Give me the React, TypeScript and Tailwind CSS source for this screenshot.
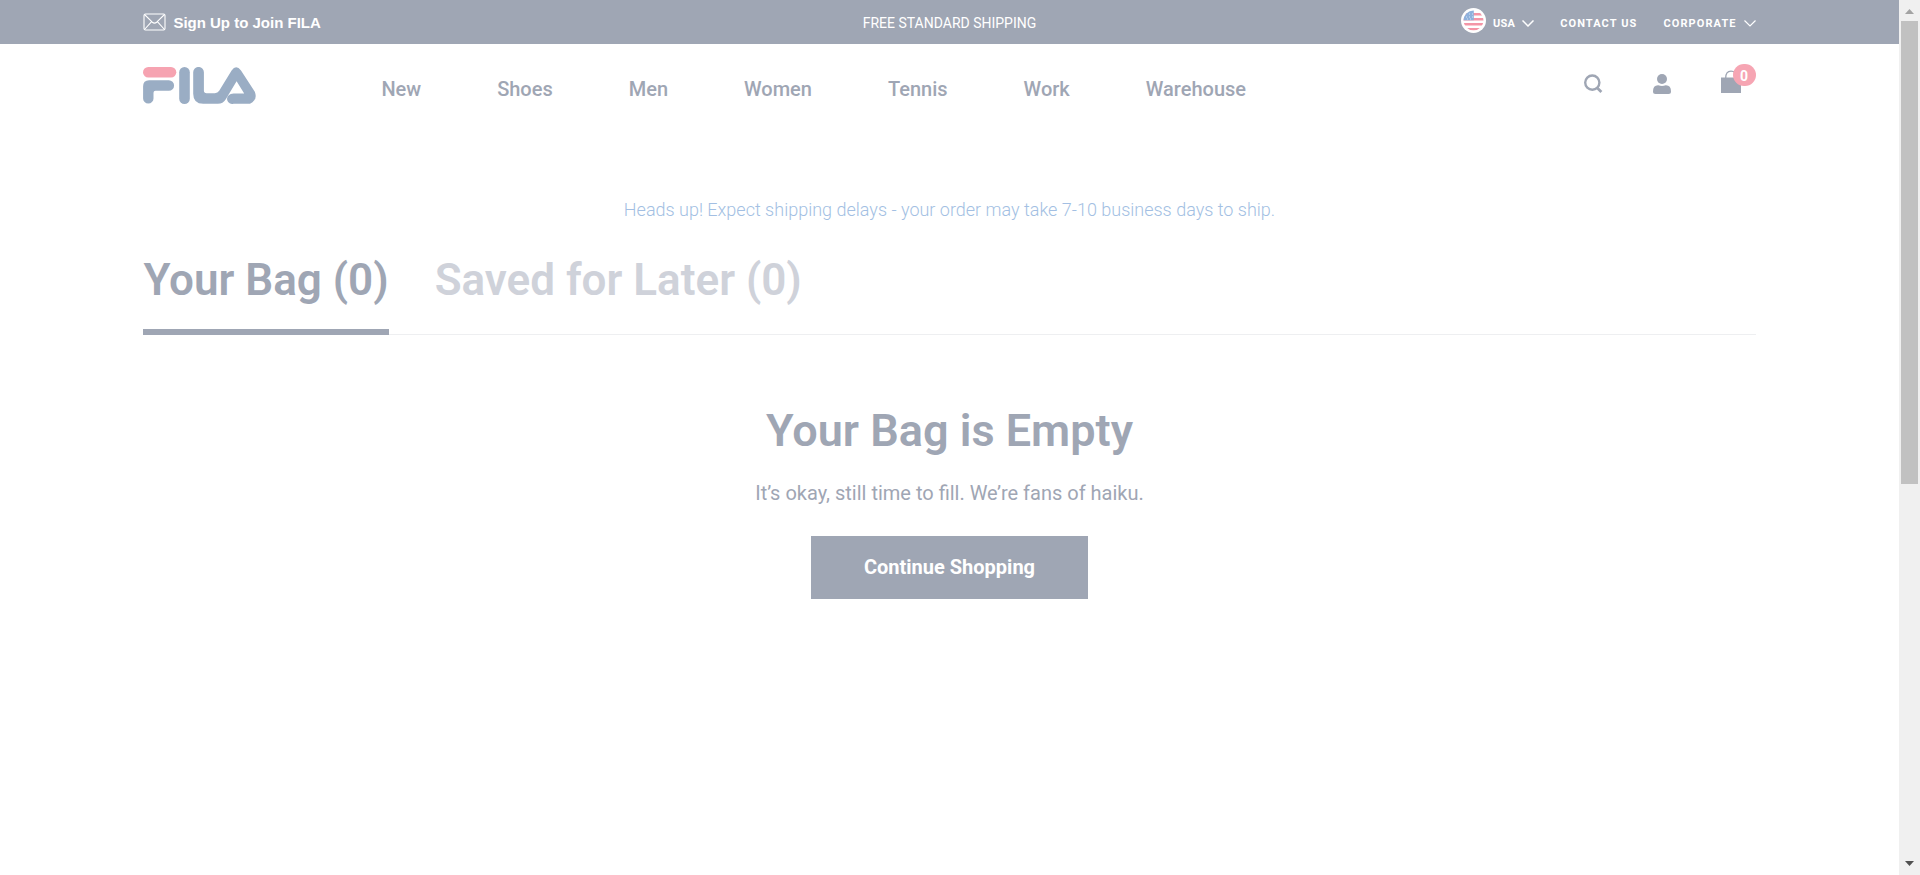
import React from "react";

const navItems = ["New", "Shoes", "Men", "Women", "Tennis", "Work", "Warehouse"];

function EnvelopeIcon() {
  return (
    <svg className="h-[18px] w-[23px]" viewBox="0 0 23 18" fill="none" stroke="#fff" strokeWidth="1.1" aria-hidden="true">
      <rect x="1" y="1" width="21" height="16" rx="1.5" />
      <path d="M1.5 1.5 9.3 9.2q2.2 1.8 4.4 0L21.5 1.5M1.5 16.5 8.6 8.7M21.5 16.5 14.4 8.7" />
    </svg>
  );
}

function FlagIcon() {
  return (
    <svg className="h-[25px] w-[25px]" viewBox="0 0 25 25" aria-hidden="true">
      <defs>
        <clipPath id="flag-disc">
          <circle cx="12.5" cy="12.5" r="10" />
        </clipPath>
      </defs>
      <circle cx="12.5" cy="12.5" r="12.5" fill="#fff" />
      <g clipPath="url(#flag-disc)">
        <path d="M2 6.2h21M2 11.3h21M2 16.3h21M2 21.2h21" stroke="#f495a6" strokeWidth="2.4" />
        <path d="M2 2h10.8v10.2H2z" fill="#8fb1dc" />
        <path d="M5 9h1M8 9h1M11 9h1M8 6h1M11 6h1M6 11h1M9 11h1" stroke="#d3e2f4" strokeWidth="1" />
      </g>
    </svg>
  );
}

function Chevron({ bold = false }: { bold?: boolean }) {
  return (
    <svg className="h-[7px] w-3" viewBox="0 0 12 7" fill="none" stroke="#fff" strokeWidth={bold ? 1.5 : 1.2} aria-hidden="true">
      <path d="M.5.5 6 6 11.5.5" />
    </svg>
  );
}

function Logo() {
  return (
    <svg className="h-[37px] w-[113px]" viewBox="0 0 113 37" fill="none" aria-hidden="true">
      <rect x="0" y="0" width="33.3" height="10.6" rx="5.3" fill="#f6a3b1" />
      <path
        d="M6 13.2h19.8a5.3 5.3 0 0 1 0 10.6H12.5q-2 0-2 2v5.6a5.2 5.2 0 0 1-10.4 0V19.2q0-6 6-6z"
        fill="#9aadc4"
      />
      <rect x="36.2" y="0" width="10.6" height="37" rx="5.3" fill="#9aadc4" />
      <path
        d="M50.2 5.3a5.35 5.35 0 0 1 10.7 0v18.2q0 2.7 2.7 2.7h8.2q2.9 0 4.4-2.4L88.6 3.4q4.5-6.2 9.4 0l13.8 21.3q3.2 8.2-4.8 12.1H90.5a5 5 0 0 1-2.7-9.8q1.3-.6 2.8-.6h10.6L93.6 14.3 82.8 32.2q-2.8 4.6-7.9 4.6H60.2q-10 0-10-10z"
        fill="#9aadc4"
      />
    </svg>
  );
}

export default function App() {
  return (
    <div className="flex min-h-screen bg-white font-[Roboto,sans-serif] text-[#9fa6b4]">
      <div className="min-w-0 flex-1">
        <div className="bg-[#9fa6b4] text-white">
          <div className="mx-auto grid h-11 w-[84.9%] grid-cols-[1fr_auto_1fr] items-center">
            <a href="#signup" className="flex items-center gap-[7px] font-['Liberation_Sans',sans-serif] text-[15px] font-bold">
              <EnvelopeIcon />
              <span className="pt-0.5">Sign Up to Join FILA</span>
            </a>
            <p className="pt-0.5 text-sm">FREE STANDARD SHIPPING</p>
            <div className="flex items-center justify-end gap-[26px] text-[11px] font-bold tracking-widest">
              <button type="button" className="flex items-center gap-[7px] tracking-wide">
                <span className="pb-1"><FlagIcon /></span>
                <span className="pt-1">USA</span>
                <span className="pt-0.5"><Chevron bold /></span>
              </button>
              <a href="#contact" className="pt-1">CONTACT US</a>
              <button type="button" className="flex items-center gap-[7px] tracking-widest">
                <span className="pt-1">CORPORATE</span>
                <span className="pt-0.5"><Chevron /></span>
              </button>
            </div>
          </div>
        </div>

        <header className="mx-auto flex w-[84.9%] items-start pt-[23px]">
          <a href="#home" aria-label="FILA"><Logo /></a>
          <nav className="ml-[125px] flex gap-[76px] pt-2.5 text-[20px] leading-6 font-medium">
            {navItems.map((item) => (
              <a key={item} href={`#${item.toLowerCase()}`}>{item}</a>
            ))}
          </nav>
          <div className="ml-auto flex items-start gap-[50px]">
            <button type="button" aria-label="Search" className="mt-[7px]">
              <svg className="h-[19px] w-[19px]" viewBox="0 0 19 19" fill="none" stroke="#9fa6b4" strokeWidth="2.4">
                <circle cx="8.3" cy="8.6" r="7.1" />
                <path d="m12.8 13.6 4.6 4.4" strokeWidth="2.8" />
              </svg>
            </button>
            <button type="button" aria-label="Account" className="mt-[7px]">
              <svg className="h-5 w-[18px]" viewBox="0 0 18 20" fill="#9fa6b4">
                <circle cx="9" cy="5" r="5" />
                <path d="M0 17.5q0-6.5 5.3-6.3 3.7 1.5 7.4 0Q18 11 18 17.5 18 20 15.5 20h-13Q0 20 0 17.5z" />
              </svg>
            </button>
            <a href="#bag" aria-label="Bag, 0 items" className="relative block h-[29px] w-[35px]">
              <svg className="mt-[3px] h-[23px] w-5" viewBox="0 0 20 23" fill="none">
                <path d="M0 7.5h20V23H0z" fill="#9fa6b4" />
                <path d="M4.7 8q0-6.8 5.3-6.8T15.3 8" stroke="#9fa6b4" strokeWidth="1.3" />
              </svg>
              <span className="absolute -top-[3px] right-0 flex h-[22px] w-[23px] items-center justify-center rounded-full bg-[#f6a5b3] pt-0.5 text-sm font-bold text-white">0</span>
            </a>
          </div>
        </header>

        <main className="mx-auto w-[84.9%] pt-[94px]">
          <p className="text-center text-[18px] leading-6 font-light text-[#a3bfe3]">
            Heads up! Expect shipping delays - your order may take 7-10 business days to ship.
          </p>
          <div className="mt-[31px] flex gap-[46px] border-b border-[#eeeff1] text-[44px] leading-[54px] font-semibold">
            <button type="button" className="-mb-px border-b-[6px] border-[#9fa6b4] pb-[22px]">Your Bag (0)</button>
            <button type="button" className="pb-[27px] text-[#cfd2da]">Saved for Later (0)</button>
          </div>
          <section className="flex flex-col items-center pt-[69px]">
            <h1 className="text-[45px] leading-[54px] font-semibold">Your Bag is Empty</h1>
            <p className="mt-5 text-[20px] leading-[30px]">It’s okay, still time to fill. We’re fans of haiku.</p>
            <a href="#shop" className="mt-7 flex h-[63px] w-[277px] items-center justify-center bg-[#9fa6b4] pb-0.5 text-[20px] font-bold text-white">
              Continue Shopping
            </a>
          </section>
        </main>
      </div>

      <div className="sticky top-0 flex h-screen w-[21px] flex-col items-center bg-[#f0f0f0]" aria-hidden="true">
        <svg className="h-[21px] w-[9px] shrink-0" viewBox="0 0 9 21"><path d="M0 14h9L4.500 9z" fill="#a3a3a3" /></svg>
        <div className="w-[17px] flex-[463] bg-[#c1c1c1]" />
        <div className="flex-[370]" />
        <svg className="h-[21px] w-[9px] shrink-0" viewBox="0 0 9 21"><path d="M0 7h9l-4.500 5z" fill="#505050" /></svg>
      </div>
    </div>
  );
}
